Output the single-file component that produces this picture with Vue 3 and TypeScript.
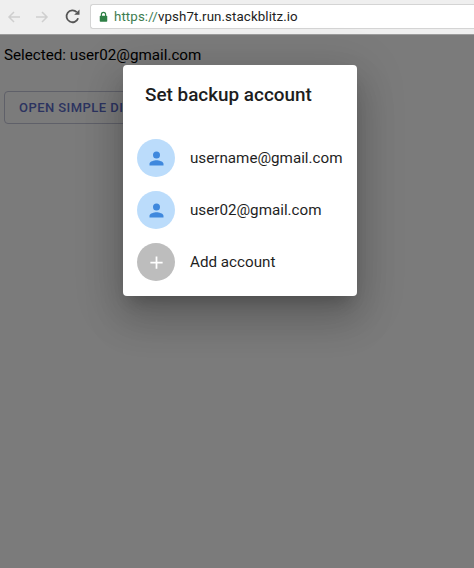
<script setup lang="ts">
const accounts = ['username@gmail.com', 'user02@gmail.com']
</script>

<template>
  <div class="window">
    <header class="toolbar">
      <svg class="nav" viewBox="0 0 16 16"><path d="M14 8H3M8 3 3 8l5 5" /></svg>
      <svg class="nav" viewBox="0 0 16 16"><path d="M2 8h11M8 3l5 5-5 5" /></svg>
      <svg class="reload" viewBox="0 0 16 16">
        <path d="M13.3 9.6A5.6 5.6 0 1 1 12 3.9" />
        <path class="solid" d="M9.6 6.3h5V1.3z" />
      </svg>
      <div class="address">
        <svg class="lock" viewBox="0 0 12 14">
          <path class="shackle" d="M3.2 6.5V4.2a2.8 2.8 0 0 1 5.6 0v2.3" />
          <rect x="1" y="6" width="10" height="8" rx="1" />
        </svg>
        <span class="url"><span class="scheme">https://</span>vpsh7t.run.stackblitz.io</span>
      </div>
    </header>
    <main class="page">
      <p class="selected">Selected: user02@gmail.com</p>
      <button class="open" type="button">OPEN SIMPLE DIALOG</button>
    </main>
    <section class="dialog">
      <h2>Set backup account</h2>
      <ul>
        <li v-for="account in accounts" :key="account">
          <span class="avatar">
            <svg viewBox="0 0 24 24"><path d="M12 12a4 4 0 1 0 0-8 4 4 0 0 0 0 8zm0 2c-2.67 0-8 1.34-8 4v2h16v-2c0-2.66-5.33-4-8-4z" /></svg>
          </span>
          <span>{{ account }}</span>
        </li>
        <li>
          <span class="avatar add">
            <svg viewBox="0 0 24 24"><path d="M19 13h-6v6h-2v-6H5v-2h6V5h2v6h6z" /></svg>
          </span>
          <span>Add account</span>
        </li>
      </ul>
    </section>
  </div>
</template>

<style>
body { margin: 0; }
</style>

<style scoped>
.window {
  position: relative;
  width: 474px;
  height: 568px;
  overflow: hidden;
  background: #7b7b7b;
  font-family: Roboto, sans-serif;
}
.toolbar {
  display: flex;
  align-items: center;
  height: 35px;
  box-sizing: border-box;
  padding: 0 0 1px 6px;
  background: #efefef;
  border-bottom: 1px solid #9c9c9c;
}
.nav { width: 16px; height: 16px; margin-right: 12px; }
.nav path { fill: none; stroke: #cfcfcf; stroke-width: 1.5; }
.reload { width: 17px; height: 17px; margin: 0 9px 0 2px; }
.reload path { fill: none; stroke: #555; stroke-width: 1.7; }
.reload .solid { fill: #555; stroke: none; }
.address {
  display: flex;
  align-items: center;
  flex: 1;
  height: 25px;
  box-sizing: border-box;
  padding-left: 8px;
  gap: 6px;
  background: #fff;
  border: 1px solid #d4d4d4;
  border-right: 0;
  border-radius: 3px 0 0 3px;
}
.lock { width: 9px; height: 11px; }
.lock rect { fill: #2f8046; }
.shackle { fill: none; stroke: #2f8046; stroke-width: 1.6; }
.url { font-size: 13.3px; letter-spacing: 0.1px; color: #222; white-space: nowrap; }
.scheme { color: #3d7c50; }
.page { padding: 0 4px; }
.selected {
  margin: 0;
  padding-top: 11px;
  font-size: 15.2px;
  line-height: 19px;
  color: #000;
}
.open {
  display: block;
  width: 220px;
  height: 33px;
  margin-top: 26px;
  padding: 0 0 0 14px;
  box-sizing: border-box;
  background: transparent;
  border: 1px solid #5f6069;
  border-radius: 4px;
  font: 500 13px Roboto, sans-serif;
  letter-spacing: 0.45px;
  color: #2c3360;
  text-align: left;
  white-space: nowrap;
  overflow: hidden;
}
.dialog {
  position: absolute;
  left: 123px;
  top: 65px;
  width: 234px;
  height: 231px;
  background: #fff;
  border-radius: 4px;
  box-shadow: 0 11px 15px -7px rgba(0,0,0,.2), 0 24px 38px 3px rgba(0,0,0,.14), 0 9px 46px 8px rgba(0,0,0,.12);
}
h2 {
  margin: 0;
  padding: 18px 22px 0;
  font-size: 18.9px;
  font-weight: 500;
  line-height: 24px;
  color: #1d1d1d;
}
ul {
  display: flex;
  flex-direction: column;
  margin: 0;
  padding: 25px 0 0 14px;
  list-style: none;
}
li {
  display: flex;
  align-items: center;
  gap: 15px;
  height: 52px;
  font-size: 15.2px;
  color: #1f1f1f;
  white-space: nowrap;
}
.avatar {
  display: flex;
  align-items: center;
  justify-content: center;
  width: 38px;
  height: 38px;
  border-radius: 50%;
  background: #bbdcfb;
}
.avatar svg { width: 21px; height: 21px; fill: #3f88dd; }
.add { background: #bdbdbd; }
.add svg { fill: #fff; }
</style>
